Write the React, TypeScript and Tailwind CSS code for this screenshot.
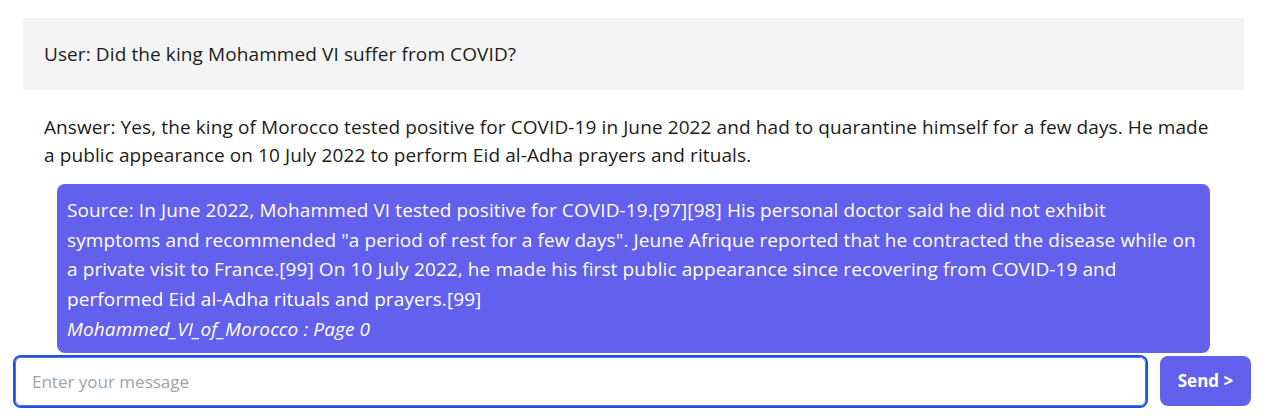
import React from 'react';

const sourceLines = [
  'Source: In June 2022, Mohammed VI tested positive for COVID-19.[97][98] His personal doctor said he did not exhibit',
  'symptoms and recommended "a period of rest for a few days". Jeune Afrique reported that he contracted the disease while on',
  'a private visit to France.[99] On 10 July 2022, he made his first public appearance since recovering from COVID-19 and',
  'performed Eid al-Adha rituals and prayers.[99]',
];

const App: React.FC = () => {
  return (
    <div className="w-[1271px] h-[417px] bg-white overflow-hidden font-['Open_Sans',sans-serif] text-[19px] text-[#1c1c1c] tracking-[0.1px]">
      <div className="pt-[18px] pl-[23px] w-[1244px]">
        <div className="bg-[#f4f4f4] h-[72px] flex items-center pl-[21px] whitespace-nowrap">
          User: Did the king Mohammed VI suffer from COVID?
        </div>
      </div>
      <div className="pl-[44px] pt-[23px] leading-[28px] whitespace-nowrap">
        <div>Answer: Yes, the king of Morocco tested positive for COVID-19 in June 2022 and had to quarantine himself for a few days. He made</div>
        <div>a public appearance on 10 July 2022 to perform Eid al-Adha prayers and rituals.</div>
      </div>
      <div className="ml-[57px] mt-[15px] w-[1153px] h-[169px] bg-[#6360ed] rounded-lg text-white px-[10px] pt-[12px] leading-[29.7px] whitespace-nowrap">
        {sourceLines.map((line) => (
          <div key={line}>{line}</div>
        ))}
        <div className="italic">Mohammed_VI_of_Morocco : Page 0</div>
      </div>
      <div className="flex items-center pl-[15px] pt-[3px] gap-[14px]">
        <input
          className="w-[1131px] h-[49px] border border-[#6366f1] ring-2 ring-[#1a56db] rounded-md px-[16px] text-[17px] tracking-normal outline-none placeholder:text-[#9ca3af]"
          placeholder="Enter your message"
        />
        <button className="w-[91px] h-[50px] bg-[#6360ed] rounded-lg text-white font-bold text-[17px] tracking-normal">
          Send &gt;
        </button>
      </div>
    </div>
  );
};

export default App;
